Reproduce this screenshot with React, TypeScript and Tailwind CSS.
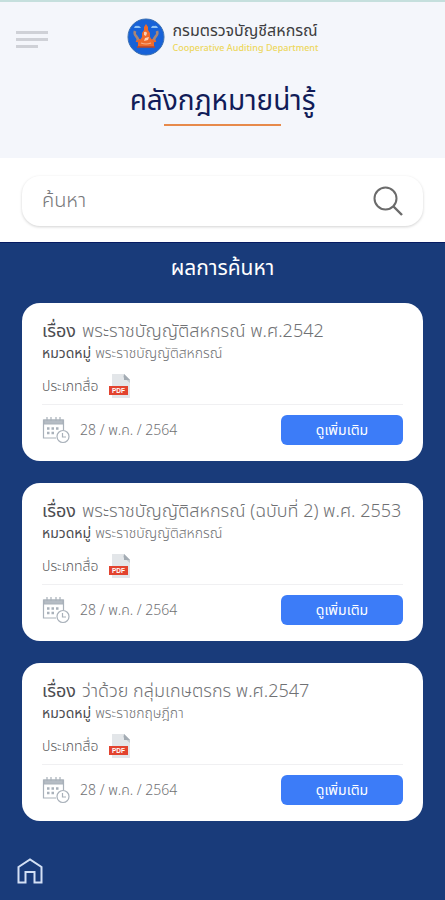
interface LawDocument {
  id: number
  title: string
  category: string
  date: string
}

const documents: LawDocument[] = [
  { id: 1, title: 'พระราชบัญญัติสหกรณ์ พ.ศ.2542', category: 'พระราชบัญญัติสหกรณ์', date: '28 / พ.ค. / 2564' },
  { id: 2, title: 'พระราชบัญญัติสหกรณ์ (ฉบับที่ 2) พ.ศ. 2553', category: 'พระราชบัญญัติสหกรณ์', date: '28 / พ.ค. / 2564' },
  { id: 3, title: 'ว่าด้วย กลุ่มเกษตรกร พ.ศ.2547', category: 'พระราชกฤษฎีกา', date: '28 / พ.ค. / 2564' },
]

function Emblem() {
  return (
    <svg viewBox="0 0 38 38" className="h-[38px] w-[38px] shrink-0" aria-hidden="true">
      <circle cx="19" cy="19" r="18" fill="#1762d8" stroke="#3a6fb0" strokeWidth="1" />
      <path d="M7 10q1-3 3-2 2-1 4 2zM24 10q1-3 3-2 3-1 4 2z" fill="#8fc3f5" />
      <path d="M19 6l2 3v3l2 3v4l2 3 2 2v5H11v-5l2-2 2-3v-4l2-3V9z" fill="#ee6a2a" />
      <path d="M8 13q-1 3 1 5t2 5M30 13q1 3-1 5t-2 5" fill="none" stroke="#a98574" strokeWidth="2.6" />
      <path d="M9 23q3 1 4-2M29 23q-3 1-4-2" fill="none" stroke="#e8672c" strokeWidth="1.8" />
      <path d="M17 14q2-1 3 1l-1 3-2-1zM18 20l4-1-1 3-4 1z" fill="#f9d0b8" />
      <path d="M14 25q5 2 10 0" fill="none" stroke="#f7b08a" strokeWidth="1.2" />
      <path d="M10 29h18" stroke="#b5482f" strokeWidth="1.6" />
    </svg>
  )
}

function SearchIcon() {
  return (
    <svg viewBox="0 0 30 30" className="h-[30px] w-[30px]" fill="none" stroke="#6b6b6b" strokeWidth="2" aria-hidden="true">
      <circle cx="12.5" cy="12.5" r="11" />
      <path d="M20.5 20.5L29 29" strokeWidth="2.4" />
    </svg>
  )
}

function PdfIcon() {
  return (
    <svg viewBox="0 0 24 26" className="h-[26px] w-6" role="img" aria-label="PDF">
      <path d="M4 1h12l6 6v18H4z" fill="#e3e6e9" />
      <path d="M16 1l6 6v3l-7-6z" fill="#c5cacf" />
      <path d="M16 1v6h6z" fill="#a3abb3" />
      <path d="M1 13h19v9H1z" fill="#e2432f" />
      <text x="10.5" y="19.9" textAnchor="middle" fontSize="6.5" fontWeight="700" fontFamily="Liberation Sans, sans-serif" fill="#fff">
        PDF
      </text>
    </svg>
  )
}

function CalendarIcon() {
  return (
    <svg viewBox="0 0 28 28" className="h-7 w-7 shrink-0" fill="none" stroke="#a9b1ba" strokeWidth="1.2" aria-hidden="true">
      <path d="M14 22H1.5V4h20v10" />
      <path d="M2 4h19v4H2z" fill="#b5bcc4" />
      <path d="M5 1v4M9 1v4M14 1v4M18 1v4" />
      <path d="M5 12.5h2.5M9.5 12.5H12M14 12.5h2.5M5 17h2.5M9.5 17H12" strokeWidth="2.4" />
      <circle cx="21" cy="20.5" r="6" fill="#fff" />
      <path d="M20.5 17v4H24" />
    </svg>
  )
}

function HomeIcon() {
  return (
    <svg viewBox="0 0 26 26" className="h-[26px] w-[26px]" fill="none" stroke="#d3e0f5" strokeWidth="2" aria-hidden="true">
      <path d="M1.5 9L13 1.5 24.5 9v15.5h-7V14h-9v10.5h-7z" />
    </svg>
  )
}

function DocumentCard({ document }: { document: LawDocument }) {
  return (
    <li className="rounded-[18px] bg-white px-5 pt-[17px] pb-4 text-[#707174]">
      <h3 className="flex gap-1.5 text-[18px] leading-6 font-light whitespace-nowrap">
        <span className="font-normal text-[#4b4c50]">เรื่อง</span>
        <span>{document.title}</span>
      </h3>
      <p className="flex gap-1 text-[14px] leading-5 font-light">
        <span className="font-normal text-[#4b4c50]">หมวดหมู่</span>
        <span>{document.category}</span>
      </p>
      <div className="flex h-[41px] items-center gap-[10px] border-b border-[#f0f0f2] pt-1 text-[14px] font-light text-[#5b5c60]">
        <span>ประเภทสื่อ</span>
        <PdfIcon />
      </div>
      <div className="flex items-center pt-[10px]">
        <CalendarIcon />
        <time className="ml-[10px] text-[14px] font-light">{document.date}</time>
        <button type="button" className="ml-auto h-[30px] w-[122px] rounded-md bg-[#3c7cf8] text-[14px] text-white">
          ดูเพิ่มเติม
        </button>
      </div>
    </li>
  )
}

export default function App() {
  return (
    <div className="flex min-h-screen flex-col bg-[#193b7a] font-['Noto_Sans_Thai','Noto_Sans',sans-serif]">
      <header className="h-[158px] border-t-2 border-[#c5dfdd] bg-[#f4f6fb]">
        <div className="grid grid-cols-[1fr_auto_1fr] items-center px-4 pt-4">
          <button type="button" aria-label="เมนู" className="mt-1 flex w-8 flex-col gap-1">
            <span className="h-[3px] w-8 bg-[#cfd1d7]" />
            <span className="h-[3px] w-8 bg-[#cfd1d7]" />
            <span className="h-[3px] w-[22px] bg-[#cfd1d7]" />
          </button>
          <a href="#" className="flex items-center gap-2">
            <Emblem />
            <span className="flex flex-col whitespace-nowrap">
              <span className="text-[16px] leading-[22px] text-[#3d3d40]">กรมตรวจบัญชีสหกรณ์</span>
              <span className="text-[9px] leading-3 font-medium text-[#edd75c]">Cooperative Auditing Department</span>
            </span>
          </a>
        </div>
        <h1 className="mt-7 text-center text-[28px] leading-9 text-[#111c58]">คลังกฎหมายน่ารู้</h1>
        <div className="mx-auto mt-1 h-[2px] w-[117px] bg-[#e78a4b]" />
      </header>

      <form role="search" className="bg-white px-[22px] pt-[18px] pb-4" onSubmit={(e) => e.preventDefault()}>
        <div className="flex h-[50px] items-center rounded-[18px] bg-white px-5 shadow-[0_1px_3px_rgba(0,0,0,0.18)]">
          <input
            type="search"
            aria-label="ค้นหา"
            placeholder="ค้นหา"
            className="min-w-0 flex-1 text-[20px] font-light text-[#77787b] outline-none placeholder:text-[#77787b]"
          />
          <button type="submit" aria-label="ค้นหา">
            <SearchIcon />
          </button>
        </div>
      </form>

      <main className="flex-1 border-t border-[#061b62] px-[22px]">
        <h2 className="pt-3 text-center text-[21px] leading-7 text-white">ผลการค้นหา</h2>
        <ul className="mt-5 flex flex-col gap-[22px]">
          {documents.map((document) => (
            <DocumentCard key={document.id} document={document} />
          ))}
        </ul>
      </main>

      <nav className="px-[17px] pb-4">
        <a href="#" aria-label="หน้าแรก" className="inline-block align-top">
          <HomeIcon />
        </a>
      </nav>
    </div>
  )
}
